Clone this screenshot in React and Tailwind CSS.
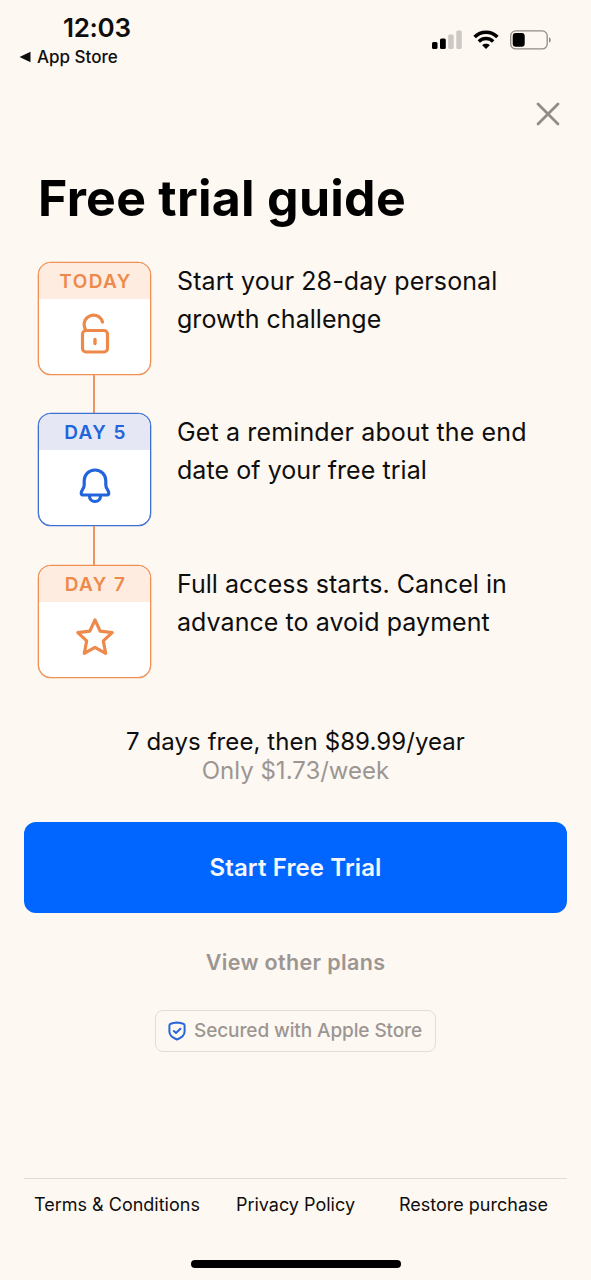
import React from "react";

const STEPS = [
  {
    label: "TODAY",
    icon: LockIcon,
    tone: "orange",
    lines: [
      { text: "Start your 28-day personal", spacing: "tracking-[0.1px]" },
      { text: "growth challenge", spacing: "tracking-[0.03px]" },
    ],
  },
  {
    label: "DAY 5",
    icon: BellIcon,
    tone: "blue",
    lines: [
      { text: "Get a reminder about the end", spacing: "tracking-[0.14px]" },
      { text: "date of your free trial", spacing: "tracking-[0.06px]" },
    ],
  },
  {
    label: "DAY 7",
    icon: StarIcon,
    tone: "orange",
    lines: [
      { text: "Full access starts. Cancel in", spacing: "tracking-[0.03px]" },
      { text: "advance to avoid payment", spacing: "tracking-[0.06px]" },
    ],
  },
];

const TONES = {
  orange: {
    card: "border-[#ef8f52] text-[#ed8a4b] shadow-[0_0_0_0.3px_#ef8f52]",
    head: "bg-[#ffece0]",
  },
  blue: {
    card: "border-[#3c6fd4] text-[#2264dc] shadow-[0_0_0_0.3px_#3c6fd4]",
    head: "bg-[#e5e7f5]",
  },
};

function LockIcon() {
  return (
    <svg className="-mt-[2px]" width="30" height="42" viewBox="0 0 30 42" fill="none" stroke="currentColor" strokeWidth="3.2" strokeLinecap="round" strokeLinejoin="round">
      <rect x="2.5" y="17.5" width="25" height="21.5" rx="3.5" />
      <path d="M6 17.5C3.2 13.5 3.5 7.5 7.3 4.4C12.5 0.2 20.5 2 22.5 9" />
      <path d="M15 26.5V30.5" strokeWidth="3.4" />
    </svg>
  );
}

function BellIcon() {
  return (
    <svg width="32" height="36" viewBox="0 0 32 36" fill="none" stroke="currentColor" strokeWidth="3.2" strokeLinejoin="round">
      <path d="M16 2C9.8 2 5.2 6.6 5.2 12.8V17C5.2 19.3 4.3 20.6 3.2 22.2C1.6 24.3 1.7 27 4.5 27H27.5C30.3 27 30.4 24.3 28.8 22.2C27.7 20.6 26.8 19.3 26.8 17V12.8C26.8 6.6 22.2 2 16 2Z" />
      <path d="M10.5 28C10.5 31.3 12.7 33.5 16 33.5C19.3 33.5 21.5 31.3 21.5 28" />
    </svg>
  );
}

function StarIcon() {
  return (
    <svg className="-mt-px" width="40" height="40" viewBox="0 0 40 40" fill="none" stroke="currentColor" strokeWidth="3.2" strokeLinejoin="round">
      <path d="M20 3L25.2 14.2L37.2 15.6L28.3 23.9L30.7 36.3L20 30.3L9.3 36.3L11.7 23.9L2.8 15.6L14.8 14.2Z" />
    </svg>
  );
}

function StatusBar() {
  return (
    <header className="flex h-20 justify-between pl-[19px] pr-[39px]">
      <div className="pt-[12px]">
        <div className="pl-[44px] text-[26px] font-semibold leading-8 tracking-[-0.3px]">12:03</div>
        <div className="flex items-center gap-[6px] text-[17px] font-medium leading-[26px]">
          <svg width="12" height="12" viewBox="0 0 12 12">
            <path d="M0.5 6L11.5 0.8V11.2Z" fill="currentColor" />
          </svg>
          App Store
        </div>
      </div>
      <div className="flex h-20 items-center gap-[11px]">
        <svg width="30" height="20" viewBox="0 0 30 20">
          <rect x="0" y="12" width="5.5" height="7" rx="1.5" />
          <rect x="8" y="8.5" width="5.8" height="10.5" rx="1.5" />
          <rect x="16.2" y="4.5" width="5.5" height="14.5" rx="1.5" fill="#cdc8c3" />
          <rect x="24.3" y="0.5" width="5.5" height="18.5" rx="1.5" fill="#cdc8c3" />
        </svg>
        <svg width="26" height="20" viewBox="0 0 26 20" fill="none" stroke="black" strokeWidth="3.5">
          <path d="M1.6 7C8 0.5 18 0.5 24.4 7" />
          <path d="M5.8 11.5C10 7.6 16 7.6 20.2 11.5" />
          <path d="M9.2 15.2C11.2 13.4 14.8 13.4 16.8 15.2L13 18.9Z" fill="black" stroke="none" />
        </svg>
        <svg width="42" height="20" viewBox="0 0 42 20">
          <rect x="0.7" y="0.9" width="36.5" height="18" rx="5" fill="none" stroke="#8f8b87" strokeWidth="1.3" />
          <rect x="2.7" y="3" width="12" height="13.8" rx="3" />
          <path d="M39 7.2C41.3 7.8 41.3 12 39 12.6Z" fill="#8f8b87" />
        </svg>
      </div>
    </header>
  );
}

function Step({ step, last }) {
  const Icon = step.icon;
  const tone = TONES[step.tone];
  return (
    <li className="flex gap-[26px]">
      <div className="flex flex-col items-center">
        <div className={`flex h-[113px] w-[113px] flex-col overflow-hidden rounded-[13px] border bg-white ${tone.card}`}>
          <div className={`flex h-[36px] items-center justify-center pl-[2px] pt-px text-[19px] font-semibold leading-none tracking-[1.4px] ${tone.head}`}>
            {step.label}
          </div>
          <div className="flex h-[71px] items-center justify-center">
            <Icon />
          </div>
        </div>
        {!last && <div className="mr-[2px] h-[38.35px] w-[2px] bg-[#ed9560]" />}
      </div>
      <p className="text-[25px] leading-[38px]">
        {step.lines.map((line) => (
          <span key={line.text} className={`block whitespace-nowrap ${line.spacing}`}>
            {line.text}
          </span>
        ))}
      </p>
    </li>
  );
}

export default function App() {
  return (
    <div className="flex h-[1280px] w-[591px] flex-col overflow-hidden bg-[#fef8f2] font-['Inter',sans-serif] text-[#0e0e0e]">
      <StatusBar />

      <div className="flex h-[88px] justify-end pr-[31px] pt-[22px]">
        <button className="h-6 w-6" aria-label="Close">
          <svg width="24" height="24" viewBox="0 0 24 24" stroke="#918c88" strokeWidth="2.8" strokeLinecap="round">
            <path d="M2 2L22 22M22 2L2 22" />
          </svg>
        </button>
      </div>

      <h1 className="h-[94px] whitespace-nowrap pl-[38px] text-[50px] font-bold leading-[60px] tracking-[0.28px] text-black">Free trial guide</h1>

      <ul className="pl-[38px]">
        {STEPS.map((step, i) => (
          <Step key={step.label} step={step} last={i === STEPS.length - 1} />
        ))}
      </ul>

      <div className="mt-[49.3px] whitespace-nowrap text-center text-[24px] leading-[29.5px]">
        <p className="tracking-[0.08px]">7 days free, then $89.99/year</p>
        <p className="text-[#9b9692]">Only $1.73/week</p>
      </div>

      <div className="mt-[36px] flex flex-col items-center px-6">
        <button className="h-[91px] w-full rounded-[12px] bg-[#0166ff] pt-px text-[24px] font-semibold tracking-[0.12px] text-[#f4f7ff]">
          Start Free Trial
        </button>
        <button className="mt-[33px] h-8 whitespace-nowrap text-[21.5px] font-semibold tracking-[0.35px] text-[#9b9692]">View other plans</button>
        <div className="mt-[32px] flex h-[42px] w-[281px] items-center whitespace-nowrap rounded-[8px] border border-[#e4dcda] pl-[12px] pt-px text-[19px] font-medium tracking-[-0.1px] text-[#9b9692]">
          <svg className="mr-[8px] shrink-0" width="18" height="20" viewBox="0 0 18 20" fill="none" stroke="#2b66d9" strokeWidth="2" strokeLinecap="round" strokeLinejoin="round">
            <path d="M9 1.5C6.5 1.7 4.5 2.1 2.7 2.8C1.8 3.1 1.4 3.6 1.4 4.5V10.5C1.4 14.5 4.8 16.8 9 18.5C13.2 16.8 16.6 14.5 16.6 10.5V4.5C16.6 3.6 16.2 3.1 15.3 2.8C13.5 2.1 11.5 1.7 9 1.5Z" />
            <path d="M5.8 10L8 12L12.4 7.8" />
          </svg>
          Secured with Apple Store
        </div>
      </div>

      <footer className="mx-6 mt-[126px] flex h-[52px] items-center whitespace-nowrap border-t border-[#e2dcd6] pl-[10px] pt-px text-[18px]">
        <a>Terms &amp; Conditions</a>
        <a className="ml-[36px]">Privacy Policy</a>
        <a className="ml-auto mr-[19px]">Restore purchase</a>
      </footer>

      <div className="mx-auto mt-[30px] h-[8px] w-[210px] shrink-0 rounded-full bg-black" />
    </div>
  );
}
